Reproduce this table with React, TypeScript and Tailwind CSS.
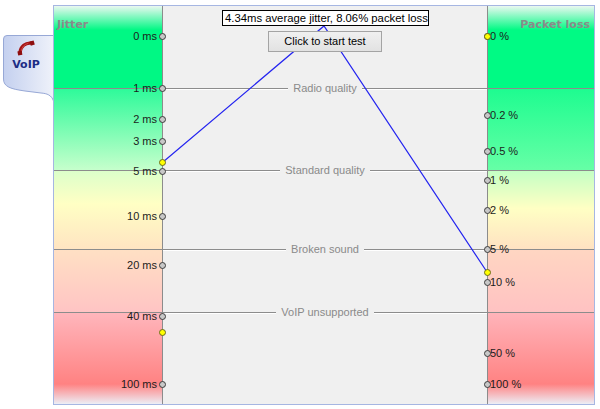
import React from "react";

const OY = 6; // page y of frame inner top
const OX = 54; // page x of frame inner left

const jitterTicks: [string, number][] = [
  ["0 ms", 36],
  ["1 ms", 88],
  ["2 ms", 119],
  ["3 ms", 141],
  ["5 ms", 171],
  ["10 ms", 216],
  ["20 ms", 265],
  ["40 ms", 316],
  ["100 ms", 384],
];
const lossTicks: [string, number][] = [
  ["0 %", 36],
  ["0.2 %", 115],
  ["0.5 %", 151],
  ["1 %", 180],
  ["2 %", 210],
  ["5 %", 249],
  ["10 %", 282],
  ["50 %", 353],
  ["100 %", 384],
];
const leftYellow = [162, 332];
const rightYellow = [36, 272];

const LX = 162 - OX; // left axis x in inner coords
const RX = 487 - OX; // right axis x in inner coords

function Phone() {
  return (
    <svg width="20" height="16" viewBox="0 0 20 16">
      <path d="M15.5 3.2 C9.5 2.2 4.5 6.5 4 12.3" fill="none" stroke="#a31414" strokeWidth="3.2" strokeLinecap="round" />
      <path d="M13.6 1.6 L17.6 0.4 L18.8 4.6 L14.8 5.8 Z" fill="#8e0e0e" />
      <path d="M1.4 11.6 L5.6 10.6 L6.4 14.8 L2.2 15.6 Z" fill="#8e0e0e" />
      <path d="M12 3.4 C8.5 4 6 7 5.4 10.4" fill="none" stroke="#d65050" strokeWidth="0.8" strokeLinecap="round" />
    </svg>
  );
}

function Tab() {
  return (
    <div className="w-[53px] shrink-0 pt-[35px] pl-[3px]">
      <div className="relative w-[50px] h-[68px]">
        <svg className="absolute left-0 top-0" width="51" height="68" viewBox="0 0 51 68">
          <defs>
            <linearGradient id="tabg" x1="0" y1="0" x2="1" y2="0">
              <stop offset="0" stopColor="#c4d0ef" />
              <stop offset="1" stopColor="#eff2fa" />
            </linearGradient>
          </defs>
          <path
            d="M0.5 4 Q0.5 0.5 4 0.5 L50.5 0.5 L50.5 66 C48.5 60 44 58.5 38 58 L22 56 C8 54 0.5 52 0.5 44 Z"
            fill="url(#tabg)"
            stroke="#97a8d6"
            strokeWidth="1"
          />
        </svg>
        <div className="relative flex flex-col items-center w-[46px] pt-[5px]">
          <Phone />
          <div className="mt-[2px] text-[11px] leading-[13px] font-bold text-[#1c2c84] font-['DejaVu_Sans',sans-serif]">VoIP</div>
        </div>
      </div>
    </div>
  );
}

const zoneNames = ["Radio quality", "Standard quality", "Broken sound", "VoIP unsupported"];

export default function App() {
  return (
    <div className="w-[600px] h-[409px] bg-white flex font-['Liberation_Sans',Arial,sans-serif] overflow-hidden">
      <Tab />
      <div className="mt-[5px] w-[542px] h-[400px] border border-[#a6b6e2] relative">
        <div className="flex h-full">
          {/* Left panel */}
          <div className="w-[109px] border-r border-[#8c8c8c] flex flex-col relative">
            <div className="h-[82px] bg-[linear-gradient(to_bottom,#eaf8f0_0px,#00f884_24px,#00f884_100%)] pt-[5px] pl-[3px]">
              <span className="text-[11px] leading-[13px] font-bold text-[#8a8a8a] font-['DejaVu_Sans',sans-serif]">Jitter</span>
            </div>
            <div className="h-[82px] border-t border-[#8c8c8c] bg-[linear-gradient(to_bottom,#2efa9a,#c6ffcc)]" />
            <div className="h-[79px] border-t border-[#8c8c8c] bg-[linear-gradient(to_bottom,#dcffca_0%,#ffffc4_42%,#ffe4c2_100%)]" />
            <div className="h-[63px] border-t border-[#8c8c8c] bg-[linear-gradient(to_bottom,#ffe0c4,#ffc4c4)]" />
            <div className="h-[92px] border-t border-[#8c8c8c] bg-[linear-gradient(to_bottom,#ffb6bc_0%,#ff8282_78%,#eceef6_100%)]" />
            {jitterTicks.map(([t, y]) => (
              <div
                key={t}
                className="absolute right-[5px] text-[11px] leading-[14px] text-[#1c1c1c] whitespace-nowrap"
                style={{ top: y - OY - 7 }}
              >
                {t}
              </div>
            ))}
          </div>
          {/* Center */}
          <div className="w-[324px] flex flex-col bg-[#f0f0f0]">
            <div className="h-[82px]" />
            {[82, 79, 63, 92].map((h, i) => (
              <div
                key={i}
                className={`border-t border-[#8c8c8c] shadow-[inset_0_1px_0_#ffffff] flex justify-center ${
                  h === 82 ? "h-[82px]" : h === 79 ? "h-[79px]" : h === 63 ? "h-[63px]" : "h-[92px]"
                }`}
              >
                <span className="-mt-[8px] h-[14px] px-[5px] bg-[#f0f0f0] text-[11px] leading-[14px] text-[#8a8a8a] whitespace-nowrap">
                  {zoneNames[i]}
                </span>
              </div>
            ))}
          </div>
          {/* Right panel */}
          <div className="w-[107px] border-l border-[#8c8c8c] flex flex-col relative">
            <div className="h-[82px] bg-[linear-gradient(to_bottom,#eaf8f0_0px,#00fa84_24px,#00fa84_100%)] pt-[5px] pr-[4px] text-right">
              <span className="text-[11px] leading-[13px] font-bold text-[#8a8a8a] font-['DejaVu_Sans',sans-serif]">Packet loss</span>
            </div>
            <div className="h-[82px] border-t border-[#8c8c8c] bg-[linear-gradient(to_bottom,#1efc90,#66ffa6)]" />
            <div className="h-[79px] border-t border-[#8c8c8c] bg-[linear-gradient(to_bottom,#c4ffc4_0%,#ffffc4_48%,#ffe2c2_100%)]" />
            <div className="h-[63px] border-t border-[#8c8c8c] bg-[linear-gradient(to_bottom,#ffd6c2,#ffc2c2)]" />
            <div className="h-[92px] border-t border-[#8c8c8c] bg-[linear-gradient(to_bottom,#ffb4ba_0%,#ff8282_78%,#eceef6_100%)]" />
            {lossTicks.map(([t, y]) => (
              <div
                key={t}
                className="absolute left-[2px] text-[11px] leading-[14px] text-[#1c1c1c] whitespace-nowrap"
                style={{ top: y - OY - 7 }}
              >
                {t}
              </div>
            ))}
          </div>
        </div>

        {/* Chart overlay: result line and markers */}
        <svg className="absolute left-0 top-0 pointer-events-none" width="540" height="398" viewBox="0 0 540 398">
          <polyline
            points={`${LX + 1},${162 - OY} ${324 - OX},${26 - OY} ${RX},${272 - OY}`}
            fill="none"
            stroke="#2424f0"
            strokeWidth="1.2"
          />
          {jitterTicks.map(([t, y]) => (
            <circle key={t} cx={LX + 0.5} cy={y - OY + 0.5} r="3" fill="#c8c8c8" stroke="#3c3c3c" strokeWidth="1" />
          ))}
          {lossTicks.map(([t, y]) => (
            <circle key={t} cx={RX + 0.5} cy={y - OY + 0.5} r="3" fill="#c8c8c8" stroke="#3c3c3c" strokeWidth="1" />
          ))}
          {leftYellow.map((y) => (
            <circle key={"l" + y} cx={LX + 0.5} cy={y - OY + 0.5} r="3" fill="#ffff00" stroke="#6a6a20" strokeWidth="1" />
          ))}
          {rightYellow.map((y) => (
            <circle key={"r" + y} cx={RX + 0.5} cy={y - OY + 0.5} r="3" fill="#ffff00" stroke="#6a6a20" strokeWidth="1" />
          ))}
        </svg>

        {/* Tooltip */}
        <div className="absolute left-[168px] top-[4px] h-[16px] w-[207px] border border-black bg-white px-[2px] text-[11.3px] leading-[14px] text-black whitespace-nowrap overflow-hidden">
          4.34ms average jitter, 8.06% packet loss
        </div>
        {/* Button */}
        <button className="absolute left-[214px] top-[25px] w-[114px] h-[21px] border border-[#a4a4a4] bg-[linear-gradient(to_bottom,#f0f0f0,#e2e2e2)] text-[11px] leading-[19px] text-black">
          Click to start test
        </button>
      </div>
    </div>
  );
}
